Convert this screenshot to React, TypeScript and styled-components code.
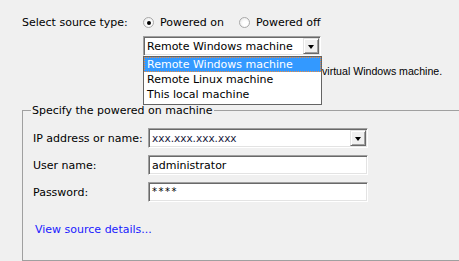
import React from 'react';
import styled, { createGlobalStyle } from 'styled-components';

const GlobalStyle = createGlobalStyle`
  html, body {
    margin: 0;
    padding: 0;
    background: #f0f0f0;
  }
  body {
    font-family: 'DejaVu Sans', 'Liberation Sans', sans-serif;
    font-size: 11px;
    color: #000;
  }
`;

const SOURCE_OPTIONS = [
  'Remote Windows machine',
  'Remote Linux machine',
  'This local machine',
];

const App: React.FC = () => {
  return (
    <>
      <GlobalStyle />
      <Page>
        <SourceRow>
          <RowLabel>Select source type:</RowLabel>
          <RadioGroup>
            <RadioOption>
              <Radio $checked />
              Powered on
            </RadioOption>
            <RadioOption>
              <Radio />
              Powered off
            </RadioOption>
          </RadioGroup>
        </SourceRow>

        <ComboArea>
          <Combo $width={178}>
            <ComboText>Remote Windows machine</ComboText>
            <DropButton>
              <Arrow />
            </DropButton>
            <DropList>
              {SOURCE_OPTIONS.map((option, i) => (
                <ListItem key={option} $selected={i === 0}>
                  {option}
                </ListItem>
              ))}
            </DropList>
          </Combo>
        </ComboArea>

        {/* the start of this line sits under the open drop-down list */}
        <Description>virtual Windows machine.</Description>

        <GroupBox>
          <Legend>Specify the powered on machine</Legend>
          <FormRow>
            <FieldLabel>IP address or name:</FieldLabel>
            <Combo $width={220}>
              <ComboText $small>xxx.xxx.xxx.xxx</ComboText>
              <DropButton>
                <Arrow />
              </DropButton>
            </Combo>
          </FormRow>
          <FormRow>
            <FieldLabel>User name:</FieldLabel>
            <TextBox>administrator</TextBox>
          </FormRow>
          <FormRow>
            <FieldLabel>Password:</FieldLabel>
            <TextBox $masked>****</TextBox>
          </FormRow>
          <DetailsLink href="#">View source details...</DetailsLink>
        </GroupBox>
      </Page>
    </>
  );
};

export default App;

const Page = styled.div`
  width: 459px;
  height: 261px;
  overflow: hidden;
  display: flex;
  flex-direction: column;
  padding-top: 16px;
  box-sizing: border-box;
`;

const SourceRow = styled.div`
  display: flex;
  align-items: center;
  padding-left: 22px;
  height: 14px;
`;

const RowLabel = styled.span`
  width: 121px;
  white-space: nowrap;
`;

const RadioGroup = styled.div`
  display: flex;
  align-items: center;
  gap: 15px;
`;

const RadioOption = styled.label`
  display: flex;
  align-items: center;
  gap: 6px;
  white-space: nowrap;
`;

const Radio = styled.span<{ $checked?: boolean }>`
  position: relative;
  width: 11px;
  height: 11px;
  border-radius: 50%;
  box-sizing: border-box;
  border: 1px solid #a9a9a9;
  background: radial-gradient(circle at 60% 60%, #ffffff 30%, #e2e2e2 100%);
  &::after {
    content: '';
    display: ${(p) => (p.$checked ? 'block' : 'none')};
    position: absolute;
    left: 2.5px;
    top: 2.5px;
    width: 4px;
    height: 4px;
    border-radius: 50%;
    background: #000;
  }
`;

const ComboArea = styled.div`
  padding-left: 143px;
  margin-top: 7px;
  position: relative;
  z-index: 2;
`;

const Combo = styled.div<{ $width: number }>`
  position: relative;
  width: ${(p) => p.$width}px;
  height: 20px;
  box-sizing: border-box;
  background: #fff;
  border-top: 1px solid #a0a0a0;
  border-left: 1px solid #a0a0a0;
  border-right: 1px solid #ffffff;
  border-bottom: 1px solid #ffffff;
  box-shadow: inset 1px 1px 0 #696969, inset -1px -1px 0 #e3e3e3;
  display: flex;
  align-items: center;
  padding: 0 1px 0 3px;
`;

const ComboText = styled.span<{ $small?: boolean }>`
  flex: 1;
  white-space: nowrap;
  overflow: hidden;
  font-size: ${(p) => (p.$small ? '10.5px' : '11px')};
  color: ${(p) => (p.$small ? '#1a1a40' : '#000')};
`;

const DropButton = styled.span`
  width: 16px;
  height: 16px;
  box-sizing: border-box;
  background: #f0f0f0;
  border-top: 1px solid #e3e3e3;
  border-left: 1px solid #e3e3e3;
  border-right: 1px solid #696969;
  border-bottom: 1px solid #696969;
  box-shadow: inset 1px 1px 0 #ffffff, inset -1px -1px 0 #a0a0a0;
  display: flex;
  align-items: center;
  justify-content: center;
`;

const Arrow = styled.span`
  width: 0;
  height: 0;
  border-left: 3.5px solid transparent;
  border-right: 3.5px solid transparent;
  border-top: 4px solid #000;
  margin-top: 1px;
`;

const DropList = styled.div`
  position: absolute;
  top: 19px;
  left: -1px;
  width: 179px;
  box-sizing: border-box;
  background: #fff;
  border: 1px solid #646464;
  padding-bottom: 2px;
`;

const ListItem = styled.div<{ $selected?: boolean }>`
  height: 15px;
  line-height: 15px;
  padding-left: 3px;
  box-sizing: border-box;
  white-space: nowrap;
  background: ${(p) => (p.$selected ? '#3399ff' : 'transparent')};
  color: ${(p) => (p.$selected ? '#fff' : '#000')};
  outline: ${(p) => (p.$selected ? '1px dotted #f08c3c' : 'none')};
  outline-offset: -1px;
`;

const Description = styled.div`
  padding-left: 322px;
  margin-top: 9px;
  white-space: nowrap;
  line-height: 13px;
  font-family: 'Liberation Sans', sans-serif;
  font-size: 10.6px;
`;

const GroupBox = styled.fieldset`
  margin: 26px 0 0 22px;
  width: 460px;
  height: 200px;
  box-sizing: border-box;
  border: 1px solid #a0a0a0;
  padding: 11px 0 0 10px;
  display: flex;
  flex-direction: column;
  gap: 7px;
`;

const Legend = styled.legend`
  padding: 0 1px;
  margin-left: -2px;
  line-height: 13px;
`;

const FormRow = styled.div`
  display: flex;
  align-items: center;
`;

const FieldLabel = styled.span`
  width: 115px;
  white-space: nowrap;
`;

const TextBox = styled.div<{ $masked?: boolean }>`
  width: 220px;
  height: 20px;
  box-sizing: border-box;
  background: #fff;
  border-top: 1px solid #a0a0a0;
  border-left: 1px solid #a0a0a0;
  border-right: 1px solid #ffffff;
  border-bottom: 1px solid #ffffff;
  box-shadow: inset 1px 1px 0 #696969, inset -1px -1px 0 #e3e3e3;
  display: flex;
  align-items: ${(p) => (p.$masked ? 'flex-start' : 'center')};
  padding: ${(p) => (p.$masked ? '3px 3px 0' : '0 3px')};
  font-size: ${(p) => (p.$masked ? '10px' : '11px')};
  letter-spacing: ${(p) => (p.$masked ? '1.5px' : '0')};
  white-space: nowrap;
`;

const DetailsLink = styled.a`
  margin-top: 14px;
  margin-left: 2px;
  color: #1a1aff;
  text-decoration: none;
  line-height: 13px;
  align-self: flex-start;
`;
